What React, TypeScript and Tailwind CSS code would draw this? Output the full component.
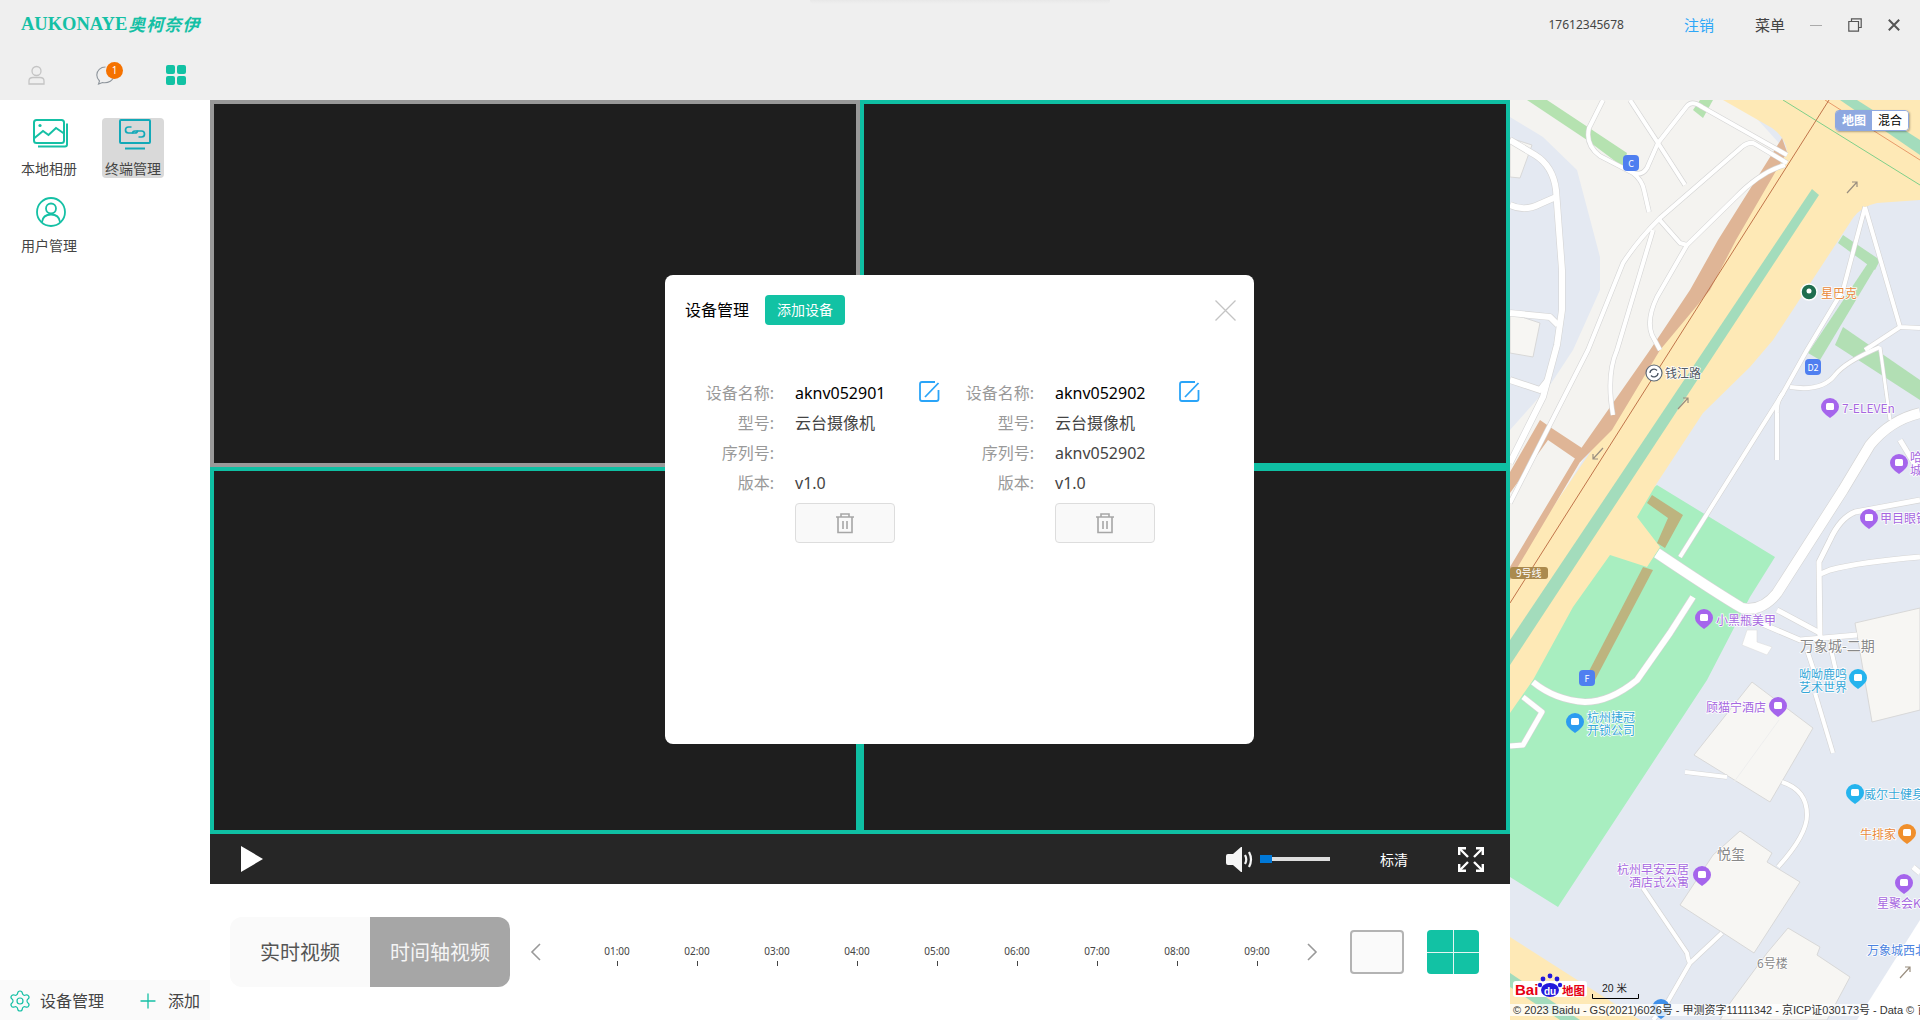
import { Plus, Settings } from "lucide-react"

const TIMES = ["01:00", "02:00", "03:00", "04:00", "05:00", "06:00", "07:00", "08:00", "09:00"]

const DEVICES = [
  { name: "aknv052901", serial: "" },
  { name: "aknv052902", serial: "aknv052902" },
]

const ROADS: [string, number][] = [
  ["M0 40 L25 55 Q43 66 46 90 L52 170 L52 210 L47 245 L33 297 L0 363", 6],
  ["M0 105 Q14 112 30 104 L46 97", 6],
  ["M0 213 L40 217 L48 225", 6],
  ["M0 280 L30 290 L38 280", 6],
  ["M93 0 L79 28 Q75 45 90 56 L123 73 Q132 80 134 90 L139 112", 4],
  ["M120 0 L148 43 L175 85", 4],
  ["M123 73 Q132 76 137 68 L148 43 L177 6 Q182 0 192 7 L277 55", 4],
  ["M277 63 L245 44 Q240 41 233 46 L150 118 Q128 140 113 163 L78 250 L0 403", 4],
  ["M275 65 Q250 72 225 98 L177 145 L147 197 Q136 220 142 235 L150 250", 4],
  ["M148 118 L170 143 L177 145", 4],
  ["M143 130 L107 250 Q96 275 103 315", 4],
  ["M355 107 L333 190 L297 250 L273 293 L170 457", 4],
  ["M355 107 L390 227 L410 228", 4],
  ["M390 227 L355 250", 4],
  ["M370 247 Q335 262 325 275 Q312 292 280 287", 4],
  ["M370 247 L380 320", 3],
  ["M410 313 Q380 320 360 345 L333 390 L267 493 Q252 512 232 508 Q205 492 147 453", 10],
  ["M267 313 L267 360", 4],
  ["M273 293 Q266 302 267 313", 4],
  ["M410 400 L345 412 Q330 418 320 440 L309 462 L310 537", 5],
  ["M410 457 Q350 462 320 470 L308 475", 5],
  ["M390 340 L410 373", 5],
  ["M183 497 L160 533 L127 580 Q100 602 75 602 Q45 600 23 582", 6],
  ["M13 597 L32 612 L13 645 L0 646", 5],
  ["M267 510 L310 533", 5],
  ["M250 523 L290 540 L347 535", 5],
  ["M297 550 L307 580", 4],
  ["M320 545 L328 580", 4],
  ["M305 593 L323 653", 4],
  ["M175 672 L217 677", 4],
  ["M272 682 Q297 690 297 715 Q297 735 268 767", 4],
  ["M133 788 L177 853 Q178 860 180 863", 4],
  ["M212 833 L180 863 L157 903 L143 920", 4],
  ["M403 767 L410 773", 5],
]

const BUILDINGS = [
  "242,582 303,628 260,702 184,655",
  "230,731 262,753 257,762 290,782 244,853 170,805 203,755",
  "278,828 310,847 307,855 340,877 317,920 210,920 220,903 257,853",
  "345,523 410,508 410,610 362,622",
  "0,38 22,45 10,78 0,77",
  "0,213 30,223 23,257 0,253",
]

const LABELS: { x: number; y: number; text: string; color: string; size?: number }[] = [
  { x: 311, y: 198, text: "星巴克", color: "#e8893c" },
  { x: 155, y: 278, text: "钱江路", color: "#555c66" },
  { x: 332, y: 313, text: "7-ELEVEn", color: "#a668e0" },
  { x: 400, y: 362, text: "哈", color: "#a668e0" },
  { x: 400, y: 375, text: "城", color: "#a668e0" },
  { x: 370, y: 423, text: "甲目眼镜", color: "#a668e0" },
  { x: 206, y: 525, text: "小黑瓶美甲", color: "#a668e0" },
  { x: 290, y: 551, text: "万象城-二期", color: "#888888", size: 14 },
  { x: 289, y: 579, text: "呦呦鹿鸣", color: "#35a7d8" },
  { x: 289, y: 592, text: "艺术世界", color: "#35a7d8" },
  { x: 77, y: 622, text: "杭州捷冠", color: "#35a7d8" },
  { x: 77, y: 635, text: "开锁公司", color: "#35a7d8" },
  { x: 196, y: 612, text: "顾猫宁酒店", color: "#a668e0" },
  { x: 354, y: 699, text: "威尔士健身", color: "#35a7d8" },
  { x: 350, y: 739, text: "牛排家", color: "#e8893c" },
  { x: 207, y: 759, text: "悦玺", color: "#888888", size: 14 },
  { x: 107, y: 774, text: "杭州早安云居", color: "#a668e0" },
  { x: 119, y: 787, text: "酒店式公寓", color: "#a668e0" },
  { x: 367, y: 808, text: "星聚会KTV", color: "#a668e0" },
  { x: 357, y: 855, text: "万象城西北", color: "#4a82e0" },
  { x: 247, y: 868, text: "6号楼", color: "#888888" },
]

const PINS: [number, number, string][] = [
  [320, 307, "#a565ec"],
  [389, 363, "#a565ec"],
  [359, 418, "#a565ec"],
  [194, 518, "#a565ec"],
  [348, 578, "#25b4ee"],
  [65, 622, "#2c9cf0"],
  [268, 606, "#a565ec"],
  [345, 693, "#25b4ee"],
  [397, 733, "#f08f2c"],
  [192, 775, "#a565ec"],
  [394, 783, "#a565ec"],
  [151, 908, "#3f8fe8"],
]

function Pin({ x, y, color }: { x: number; y: number; color: string }) {
  return (
    <g>
      <path d={`M${x - 9} ${y} a9 9 0 1 1 18 0 q0 5 -9 11 q-9 -6 -9 -11z`} fill={color} />
      <rect x={x - 4} y={y - 4} width="8" height="7" rx="1.5" fill="#fff" />
    </g>
  )
}

function Marker({ x, y, text }: { x: number; y: number; text: string }) {
  return (
    <g>
      <rect x={x - 8} y={y - 8} width="16" height="16" rx="4" fill="#4f7ff0" />
      <text x={x} y={y + 3.5} textAnchor="middle" fontSize="9" fill="#fff">
        {text}
      </text>
    </g>
  )
}

function MapCanvas() {
  return (
    <svg viewBox="0 0 410 920" className="h-full w-full" fontFamily="'Noto Sans CJK SC', sans-serif">
      <rect width="410" height="920" fill="#e4e9f2" />
      {/* land */}
      <polygon points="0,0 230,0 277,52 140,250 0,480 0,330 40,285 63,250 90,190 90,157 67,70 33,37 0,17" fill="#f4f3f0" />
      <polygon points="147,385 265,457 240,497 197,580 48,807 0,777 0,500" fill="#a8eec0" />
      {/* light green strips */}
      <polygon points="17,0 37,0 117,53 113,67 77,40" fill="#b5e2b0" />
      <polygon points="183,10 190,0 203,0 193,18" fill="#b5e2b0" />
      <polygon points="333,135 370,160 365,170 328,143" fill="#b2dfb4" />
      <polygon points="358,163 370,160 310,260 298,253" fill="#b2dfb4" />
      <polygon points="333,227 410,280 410,300 325,245" fill="#b2dfb4" />
      {/* main road */}
      <path d="M213 0 L410 0 L410 100 L367 103 Q352 106 343 118 L263 240 L240 267 L193 313 L147 383 L127 417 L150 447 L137 467 L100 455 L63 507 L23 580 L0 613 L0 470 L150 250 L277 52 Q276 38 262 28z" fill="#fee9b6" />
      <polygon points="0,837 130,920 0,920" fill="#fee9b6" />
      <polygon points="0,873 70,920 50,920 0,887" fill="#a3dcbc" />
      <polygon points="272,38 277,52 226,140 200,190 150,250 102,330 70,362 0,480 0,467 70,350 140,250 180,190 208,140" fill="#dfb596" />
      <polygon points="30,320 40,327 78,352 70,362 38,340 0,393 0,372" fill="#dfb596" />
      <polygon points="302,89 309,95 0,565 0,540" fill="#a3dcbc" />
      <polygon points="330,0 347,0 410,40 410,55" fill="#a3dcbc" />
      <line x1="273" y1="0" x2="410" y2="85" stroke="#7fcf8a" strokeWidth="1" />
      <line x1="315" y1="0" x2="410" y2="60" stroke="#e89a6a" strokeWidth="1" />
      <line x1="319" y1="0" x2="0" y2="503" stroke="#c0744a" strokeWidth="1" />
      {/* paths over grass */}
      <polygon points="142,395 173,415 155,448 147,443 158,418 137,403" fill="#bdb47f" />
      <polygon points="133,467 143,470 85,580 77,575" fill="#bdb47f" />
      {/* buildings */}
      {BUILDINGS.map((p) => (
        <polygon key={p} points={p} fill="#f7f6f3" stroke="#d8d8d8" strokeWidth="1" />
      ))}
      <line x1="269" y1="620" x2="224" y2="682" stroke="#eeeeee" />
      <polygon points="237,530 232,545 257,555 262,547 247,542 247,530" fill="#fff" stroke="#dddddd" strokeWidth="0.6" />
      <polygon points="410,820 347,920 410,920" fill="#fff" />
      {/* roads */}
      {ROADS.map(([d, w]) => (
        <path key={`o${d}`} d={d} fill="none" stroke="#d5d5d5" strokeWidth={w + 1.2} strokeLinejoin="round" />
      ))}
      {ROADS.map(([d, w]) => (
        <path key={d} d={d} fill="none" stroke="#ffffff" strokeWidth={w} strokeLinejoin="round" />
      ))}
      {/* direction arrows */}
      <path d="M337 93 L347 82 M342 82 L347 82 L347 87" fill="none" stroke="#9a8f80" strokeWidth="1.2" />
      <path d="M168 309 L178 298 M173 298 L178 298 L178 303" fill="none" stroke="#9a8f80" strokeWidth="1.2" />
      <path d="M93 348 L83 359 M88 359 L83 359 L83 354" fill="none" stroke="#9a8f80" strokeWidth="1.2" />
      <path d="M390 878 L400 867 M395 867 L400 867 L400 872" fill="none" stroke="#9a8f80" strokeWidth="1.2" />
      {/* pois */}
      <circle cx="299" cy="192" r="8" fill="#1f6e4f" stroke="#ffffff" strokeWidth="1.5" />
      <circle cx="299" cy="191" r="2.5" fill="#ffffff" />
      <circle cx="144" cy="273" r="8" fill="#ffffff" stroke="#5f6a78" strokeWidth="1.2" />
      <path d="M140 273 a4 4 0 0 1 7 -2.5 M148 273 a4 4 0 0 1 -7 2.5" fill="none" stroke="#4a5562" strokeWidth="1.3" />
      <Marker x={121} y={63} text="C" />
      <Marker x={303} y={267} text="D2" />
      <Marker x={77} y={578} text="F" />
      {PINS.map(([x, y, c]) => (
        <Pin key={`${x}-${y}`} x={x} y={y} color={c} />
      ))}
      <rect x="0" y="467" width="38" height="12" rx="3" fill="#ab8a4d" />
      <text x="6" y="477" fontSize="10" fill="#ffffff">
        9号线
      </text>
      {LABELS.map((l) => (
        <text
          key={l.text}
          x={l.x}
          y={l.y}
          fontSize={l.size ?? 12}
          fill={l.color}
          stroke="#ffffff"
          strokeWidth="1.5"
          className="[paint-order:stroke]"
        >
          {l.text}
        </text>
      ))}
      {/* baidu logo */}
      <rect x="3" y="881" width="74" height="16" rx="3" fill="#ffffff" />
      <text x="5" y="895" fontSize="15" fontWeight="700" fontFamily="'Liberation Sans', sans-serif" fill="#e60012">
        Bai
      </text>
      <g fill="#2319dc">
        <circle cx="33" cy="879" r="2.4" />
        <circle cx="40" cy="876" r="2.4" />
        <circle cx="47" cy="879" r="2.4" />
        <circle cx="50" cy="885" r="2.2" />
        <circle cx="30" cy="885" r="2.2" />
        <ellipse cx="40" cy="890" rx="9" ry="7" />
      </g>
      <text x="34" y="895" fontSize="10" fontWeight="700" fontFamily="'Liberation Sans', sans-serif" fill="#ffffff">
        du
      </text>
      <text x="52" y="895" fontSize="11.5" fontWeight="700" fill="#e60012">
        地图
      </text>
      {/* scale */}
      <text x="92" y="892" fontSize="10.5" fontFamily="'Liberation Sans', 'Noto Sans CJK SC', sans-serif" fill="#222222">
        20 米
      </text>
      <path d="M82.5 894 V898.5 H128.5 V894" fill="none" stroke="#000000" />
      {/* copyright */}
      <rect x="0" y="904" width="410" height="12" fill="#ffffff" opacity="0.75" />
      <text x="3" y="914" fontSize="11" fontFamily="'Liberation Sans', 'Noto Sans CJK SC', sans-serif" fill="#333333">
        © 2023 Baidu - GS(2021)6026号 - 甲测资字11111342 - 京ICP证030173号 - Data © 百度智图
      </text>
    </svg>
  )
}

function DeviceCard({ name, serial }: { name: string; serial: string }) {
  const label = "w-[79px] text-right text-[#999999]"
  return (
    <div className="w-[260px] text-base text-[#444444]">
      <div className="flex h-[31px] items-center">
        <span className={label}>设备名称:</span>
        <span className="ml-[21px] w-[124px] text-black">{name}</span>
        <svg className="mb-[3px]" width="21" height="21" viewBox="0 0 21 21" fill="none" stroke="#2aa4f8" strokeWidth="1.8">
          <path d="M19.5 9 V18 Q19.5 20 17.5 20 H3 Q1 20 1 18 V3 Q1 1 3 1 H16" />
          <path d="M6 16 L19.5 2" />
        </svg>
      </div>
      <div className="flex h-[30px] items-center">
        <span className={label}>型号:</span>
        <span className="ml-[21px]">云台摄像机</span>
      </div>
      <div className="flex h-[30px] items-center">
        <span className={label}>序列号:</span>
        <span className="ml-[21px]">{serial}</span>
      </div>
      <div className="flex h-[30px] items-center">
        <span className={label}>版本:</span>
        <span className="ml-[21px]">v1.0</span>
      </div>
      <button className="ml-[100px] mt-[5px] flex h-[40px] w-[100px] items-center justify-center rounded border border-[#dddddd] bg-[#f9f9f9]">
        <svg width="20" height="22" viewBox="0 0 20 22" fill="none" stroke="#a6a6a6" strokeWidth="1.6">
          <path d="M1 5 H19 M6 5 V2 H14 V5 M3 5 V20.5 H17 V5 M8 9 V17 M12 9 V17" />
        </svg>
      </button>
    </div>
  )
}

export default function App() {
  return (
    <div className="relative flex h-[1020px] w-[1920px] flex-col overflow-hidden bg-white font-['Noto_Sans','Noto_Sans_CJK_SC',sans-serif]">
      {/* ================= HEADER ================= */}
      <header className="h-[100px] shrink-0 bg-[#efefef]">
        <div className="flex h-[50px] items-center pl-[21px]">
          <span className="font-['Liberation_Serif',serif] text-[18.5px] font-bold text-[#15c0a5]">AUKONAYE</span>
          <span className="ml-px text-[17px] font-bold italic tracking-[1px] text-[#15c0a5]">奥柯奈伊</span>
          <span className="ml-auto text-xs text-[#444444]">17612345678</span>
          <span className="ml-[60px] text-[15px] text-[#2ea7f8]">注销</span>
          <span className="ml-[41px] text-[15px] text-[#444444]">菜单</span>
          <span className="ml-[25px] h-px w-[12px] bg-[#aaaaaa]" />
          <svg className="ml-[26px]" width="14" height="14" viewBox="0 0 14 14" fill="none" stroke="#555555" strokeWidth="1.2">
            <path d="M3.5 3.5 V0.8 H13.2 V9.5 H10.5 M0.8 3.5 H10.5 V13.2 H0.8 Z" />
          </svg>
          <svg className="ml-[26px] mr-[20px]" width="12" height="12" viewBox="0 0 12 12" fill="none" stroke="#555555" strokeWidth="2">
            <path d="M0.8 0.8 L11.2 11.2 M11.2 0.8 L0.8 11.2" />
          </svg>
        </div>
        <div className="flex h-[50px] items-center pl-[28px]">
          <svg width="17" height="20" viewBox="0 0 17 20" fill="none" stroke="#c4c4c4" strokeWidth="1.3">
            <circle cx="8.5" cy="6" r="4.5" />
            <path d="M1 19 V16 Q1 12.5 5 12.5 H12 Q16 12.5 16 16 V19 Z" />
          </svg>
          <div className="relative ml-[51px]">
            <svg width="19" height="20" viewBox="0 0 19 20" fill="none" stroke="#8e959c" strokeWidth="1.1" className="block">
              <path d="M9.5 2 C4.5 2 0.8 5.5 0.8 10 C0.8 12.5 2 14.5 3.5 16 L2.5 19 L6.5 17.5 C12 18.5 18 15.5 18 10" />
            </svg>
            <span className="absolute left-[10px] top-[-3px] flex h-[17px] w-[17px] items-center justify-center rounded-full bg-[#f57200] text-[10px] text-white">
              1
            </span>
          </div>
          <div className="ml-[51px] grid h-[20px] w-[20px] grid-cols-2 gap-[2px]">
            <span className="rounded-[2px] bg-[#12c2a4]" />
            <span className="rounded-[2px] bg-[#12c2a4]" />
            <span className="rounded-[2px] bg-[#12c2a4]" />
            <span className="rounded-[2px] bg-[#12c2a4]" />
          </div>
        </div>
      </header>
      <div className="absolute left-[810px] top-0 h-[4px] w-[300px] rounded-b-lg bg-gradient-to-b from-[#e8e8e8] to-[#efefef]" />

      <div className="flex min-h-0 flex-1">
        {/* ================= SIDEBAR ================= */}
        <aside className="flex w-[210px] shrink-0 flex-col justify-between">
          <div className="flex flex-wrap gap-x-[22px] gap-y-[18px] pl-[18px] pt-[18px]">
            <div className="flex h-[60px] w-[62px] flex-col items-center justify-between text-sm text-[#444444]">
              <svg width="36" height="29" viewBox="0 0 36 29" fill="none" stroke="#15c0a5" strokeWidth="2" className="ml-[4px] mt-px">
                <rect x="1" y="1" width="30" height="23" rx="2.5" />
                <path d="M1.5 19 L10 12 L15.5 16 L23 9 L31 14.5" />
                <circle cx="7" cy="6.5" r="1.6" fill="#15c0a5" stroke="none" />
                <path d="M34 4.5 V25.5 Q34 27.5 32 27.5 H5" />
              </svg>
              <span className="leading-[18px]">本地相册</span>
            </div>
            <div className="flex h-[60px] w-[62px] flex-col items-center justify-between rounded-sm bg-[#d9d9d9] text-sm text-[#444444]">
              <svg width="32" height="31" viewBox="0 0 32 31" fill="none" stroke="#12a9b8" strokeWidth="2" className="ml-[3px] mt-px">
                <rect x="1" y="1" width="30" height="23" rx="1" />
                <path d="M12.5 8 H9.5 Q6.5 8 6.5 11 Q6.5 14 9.5 14 H16 Q18.5 14 18.5 11.5" strokeWidth="1.7" />
                <path d="M19.5 18 H22.5 Q25.5 18 25.5 15 Q25.5 12 22.5 12 H16 Q13.5 12 13.5 14.5" strokeWidth="1.7" />
                <path d="M6 29.5 H26" />
              </svg>
              <span className="leading-[18px]">终端管理</span>
            </div>
            <div className="flex h-[60px] w-[62px] flex-col items-center justify-between text-sm text-[#444444]">
              <svg width="30" height="30" viewBox="0 0 30 30" fill="none" stroke="#15c0a5" strokeWidth="1.8" className="ml-[4px] mt-px">
                <circle cx="15" cy="15" r="14" />
                <circle cx="15" cy="11.5" r="5" />
                <path d="M6 25 Q7 17.5 15 17.5 Q23 17.5 24 25" />
              </svg>
              <span className="leading-5">用户管理</span>
            </div>
          </div>
          <div className="flex h-[40px] items-center bg-[#fafafa] pl-[8px] pt-[2px] text-base text-[#444444]">
            <Settings size={24} strokeWidth={1.2} className="text-[#15c0a5]" />
            <span className="ml-[8px]">设备管理</span>
            <Plus size={24} strokeWidth={1.3} className="ml-[32px] text-[#15c0a5]" />
            <span className="ml-[8px]">添加</span>
          </div>
        </aside>

        {/* ================= VIDEO ================= */}
        <main className="flex w-[1300px] shrink-0 flex-col">
          <div className="grid h-[734px] grid-cols-2 grid-rows-2">
            <div className="border-4 border-[#999999] bg-[#1e1e1e]" />
            <div className="border-4 border-[#0fbfa3] bg-[#1e1e1e]" />
            <div className="border-4 border-[#0fbfa3] bg-[#1e1e1e]" />
            <div className="border-4 border-[#0fbfa3] bg-[#1e1e1e]" />
          </div>
          <div className="flex h-[50px] items-center bg-[#262626] pl-[31px]">
            <svg width="22" height="26" viewBox="0 0 22 26" fill="#ffffff">
              <path d="M0 0 L22 13 L0 26 Z" />
            </svg>
            <svg className="ml-auto" width="28" height="25" viewBox="0 0 28 25" fill="#f5f5f5">
              <path d="M0 9 Q0 7 2 7 H7 L15 0 H16 V25 H15 L7 18 H2 Q0 18 0 16 Z" />
              <path d="M19 8 Q21.5 12.5 19 17 M23 5 Q27 12.5 23 20" fill="none" stroke="#f5f5f5" strokeWidth="2.2" />
            </svg>
            <div className="relative ml-[6px] h-[4px] w-[70px] bg-[#dddddd]">
              <span className="absolute left-0 top-[-2px] h-[8px] w-[12px] bg-[#0078d7]" />
            </div>
            <span className="ml-[50px] text-[14px] text-white">标清</span>
            <svg className="ml-[50px] mr-[26px]" width="26" height="25" viewBox="0 0 26 25" fill="none" stroke="#ffffff" strokeWidth="2.4">
              <path d="M1.2 8 V1.2 H8 M18 1.2 H24.8 V8 M24.8 17 V23.8 H18 M8 23.8 H1.2 V17" />
              <path d="M1.5 1.5 L10 10 M24.5 1.5 L16 10 M24.5 23.5 L16 15 M1.5 23.5 L10 15" />
            </svg>
          </div>
          <div className="flex flex-1 items-center pl-[20px]">
            <div className="flex h-[70px] w-[280px] overflow-hidden rounded-xl text-[20px]">
              <div className="flex w-[140px] items-center justify-center bg-[#fafafa] pt-[2px] text-[#555555]">实时视频</div>
              <div className="flex w-[140px] items-center justify-center bg-[#a6a6a6] pt-[2px] text-[#f5f5f5]">时间轴视频</div>
            </div>
            <svg className="ml-[20px]" width="12" height="18" viewBox="0 0 12 18" fill="none" stroke="#999999" strokeWidth="1.6">
              <path d="M10 1 L2 9 L10 17" />
            </svg>
            <div className="ml-[35px] flex pt-[6px]">
              {TIMES.map((t) => (
                <div key={t} className="flex w-[80px] flex-col items-center text-[10px] leading-[14px] text-[#444444]">
                  <span>{t}</span>
                  <span className="mt-[3px] h-[5px] w-px bg-[#444444]" />
                </div>
              ))}
            </div>
            <svg className="ml-[9px]" width="12" height="18" viewBox="0 0 12 18" fill="none" stroke="#999999" strokeWidth="1.6">
              <path d="M2 1 L10 9 L2 17" />
            </svg>
            <div className="ml-[32px] h-[44px] w-[54px] rounded border-2 border-[#b3b3b3] bg-[#fafafa]" />
            <div className="ml-[23px] grid h-[44px] w-[52px] grid-cols-2 grid-rows-2 gap-px overflow-hidden rounded bg-[#e5f5f2]">
              <span className="bg-[#12c2a4]" />
              <span className="bg-[#12c2a4]" />
              <span className="bg-[#12c2a4]" />
              <span className="bg-[#12c2a4]" />
            </div>
          </div>
        </main>

        {/* ================= MAP ================= */}
        <section className="relative min-w-0 flex-1 overflow-hidden">
          <MapCanvas />
          <div className="absolute left-[325px] top-[10px] flex h-[21px] w-[74px] overflow-hidden rounded-sm border border-[#8ea8e0] text-xs shadow-[1px_1px_2px_rgba(0,0,0,0.3)]">
            <span className="flex flex-1 items-center justify-center bg-[#8ea8e0] font-bold text-white">地图</span>
            <span className="flex flex-1 items-center justify-center bg-white text-black">混合</span>
          </div>
        </section>
      </div>

      {/* ================= DEVICE DIALOG ================= */}
      <div className="absolute left-[665px] top-[275px] h-[469px] w-[589px] rounded-lg bg-white pl-[30px]">
        <div className="-ml-[10px] flex h-[50px] items-end">
          <div className="flex h-[30px] items-center">
            <span className="text-base text-black">设备管理</span>
            <span className="ml-[16px] flex h-[30px] w-[80px] items-center justify-center rounded bg-[#12c2a4] text-sm text-white">
              添加设备
            </span>
          </div>
        </div>
        <svg className="absolute left-[550px] top-[25px]" width="21" height="21" viewBox="0 0 21 21" fill="none" stroke="#c4c4c4" strokeWidth="1.3">
          <path d="M0.5 0.5 L20.5 20.5 M20.5 0.5 L0.5 20.5" />
        </svg>
        <div className="mt-[52px] flex">
          {DEVICES.map((d) => (
            <DeviceCard key={d.name} name={d.name} serial={d.serial} />
          ))}
        </div>
      </div>
    </div>
  )
}
